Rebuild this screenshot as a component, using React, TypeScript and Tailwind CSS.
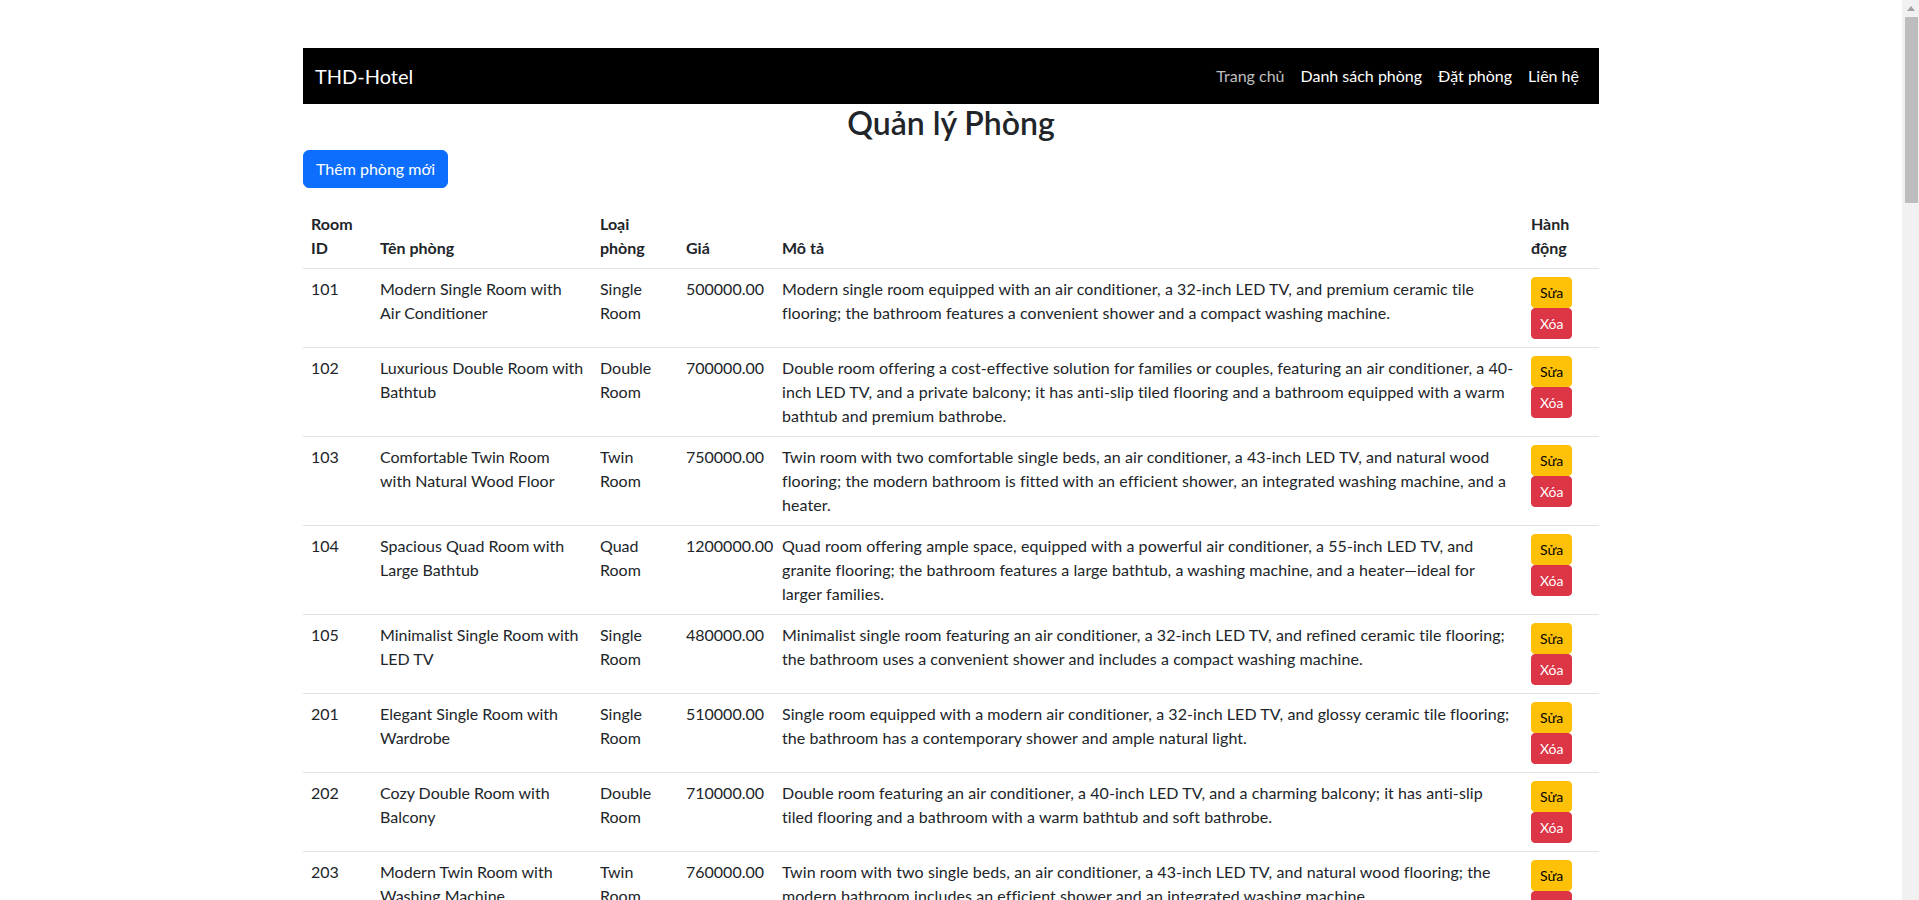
import React from "react";

type Room = {
  id: number;
  name: string;
  type: string;
  price: string;
  desc: string;
};

const firstRooms: Room[] = [
  {
    id: 101,
    name: "Modern Single Room with Air Conditioner",
    type: "Single Room",
    price: "500000.00",
    desc: "Modern single room equipped with an air conditioner, a 32-inch LED TV, and premium ceramic tile flooring; the bathroom features a convenient shower and a compact washing machine.",
  },
  {
    id: 102,
    name: "Luxurious Double Room with Bathtub",
    type: "Double Room",
    price: "700000.00",
    desc: "Double room offering a cost-effective solution for families or couples, featuring an air conditioner, a 40-inch LED TV, and a private balcony; it has anti-slip tiled flooring and a bathroom equipped with a warm bathtub and premium bathrobe.",
  },
  {
    id: 103,
    name: "Comfortable Twin Room with Natural Wood Floor",
    type: "Twin Room",
    price: "750000.00",
    desc: "Twin room with two comfortable single beds, an air conditioner, a 43-inch LED TV, and natural wood flooring; the modern bathroom is fitted with an efficient shower, an integrated washing machine, and a heater.",
  },
  {
    id: 104,
    name: "Spacious Quad Room with Large Bathtub",
    type: "Quad Room",
    price: "1200000.00",
    desc: "Quad room offering ample space, equipped with a powerful air conditioner, a 55-inch LED TV, and granite flooring; the bathroom features a large bathtub, a washing machine, and a heater\u2014ideal for larger families.",
  },
  {
    id: 105,
    name: "Minimalist Single Room with LED TV",
    type: "Single Room",
    price: "480000.00",
    desc: "Minimalist single room featuring an air conditioner, a 32-inch LED TV, and refined ceramic tile flooring; the bathroom uses a convenient shower and includes a compact washing machine.",
  },
  {
    id: 201,
    name: "Elegant Single Room with Wardrobe",
    type: "Single Room",
    price: "510000.00",
    desc: "Single room equipped with a modern air conditioner, a 32-inch LED TV, and glossy ceramic tile flooring; the bathroom has a contemporary shower and ample natural light.",
  },
  {
    id: 202,
    name: "Cozy Double Room with Balcony",
    type: "Double Room",
    price: "710000.00",
    desc: "Double room featuring an air conditioner, a 40-inch LED TV, and a charming balcony; it has anti-slip tiled flooring and a bathroom with a warm bathtub and soft bathrobe.",
  },
  {
    id: 203,
    name: "Modern Twin Room with Washing Machine",
    type: "Twin Room",
    price: "760000.00",
    desc: "Twin room with two single beds, an air conditioner, a 43-inch LED TV, and natural wood flooring; the modern bathroom includes an efficient shower and an integrated washing machine.",
  },
  {
    id: 204,
    name: "Family Quad Room with Heater",
    type: "Quad Room",
    price: "1210000.00",
    desc: "Quad room with generous space, a powerful air conditioner, a 55-inch LED TV, and granite flooring; the bathroom offers a large bathtub, a washing machine, and a heater.",
  },
  {
    id: 205,
    name: "Bright Single Room with Desk",
    type: "Single Room",
    price: "490000.00",
    desc: "Single room with an air conditioner, a 32-inch LED TV, a work desk, and ceramic tile flooring; the bathroom has a convenient shower and a compact washing machine.",
  },
];

// các phòng tầng trên dùng lại mẫu, chỉ đổi giá
const templates = firstRooms.slice(5);
const priceBump = [0, 20000, 40000, 60000, 80000, 100000, 120000, 140000];

const rooms: Room[] = [...firstRooms];
for (let floor = 3; floor <= 10; floor++) {
  templates.forEach((t, i) => {
    if (rooms.length >= 48) return;
    const base = parseFloat(t.price);
    rooms.push({
      ...t,
      id: floor * 100 + i + 1,
      price: (base + priceBump[floor - 3]).toFixed(2),
    });
  });
}

export default function App() {
  return (
    <div className="flex h-screen overflow-hidden bg-white text-[#212529] font-['Segoe_UI',Lato,'Noto_Sans',sans-serif] text-base leading-6">
      <div className="flex-1 overflow-y-auto [scrollbar-width:none]">
        <div className="mx-auto max-w-[1320px] px-3 pt-12">
          {/* thanh điều hướng */}
          <nav className="bg-black h-14 flex items-center justify-between px-3">
            <a className="text-white text-xl leading-[30px]">THD-Hotel</a>
            <ul className="flex items-center">
              <li>
                <a className="block px-2 py-2 text-white/75">Trang chủ</a>
              </li>
              <li>
                <a className="block px-2 py-2 text-white">Danh sách phòng</a>
              </li>
              <li>
                <a className="block px-2 py-2 text-white">Đặt phòng</a>
              </li>
              <li>
                <a className="block px-2 py-2 text-white">Liên hệ</a>
              </li>
            </ul>
          </nav>

          <h2 className="text-center text-[32px] leading-[1.2] font-semibold mb-2">
            Quản lý Phòng
          </h2>

          <div className="mb-4">
            <button className="inline-flex bg-[#0d6efd] border border-[#0d6efd] text-white rounded-md px-3 py-1.5 leading-6">
              Thêm phòng mới
            </button>
          </div>

          {/* bảng phòng */}
          <table className="w-full table-fixed border-collapse">
            <colgroup>
              <col className="w-[69px]" />
              <col className="w-[220px]" />
              <col className="w-[86px]" />
              <col className="w-[96px]" />
              <col />
              <col className="w-[76px]" />
            </colgroup>
            <thead>
              <tr className="align-bottom">
                <th className="p-2 text-left font-bold border-b border-[#dee2e6]">Room ID</th>
                <th className="p-2 text-left font-bold border-b border-[#dee2e6]">Tên phòng</th>
                <th className="p-2 text-left font-bold border-b border-[#dee2e6]">Loại phòng</th>
                <th className="p-2 text-left font-bold border-b border-[#dee2e6]">Giá</th>
                <th className="p-2 text-left font-bold border-b border-[#dee2e6]">Mô tả</th>
                <th className="p-2 text-left font-bold border-b border-[#dee2e6]">Hành động</th>
              </tr>
            </thead>
            <tbody>
              {rooms.map((r) => (
                <tr key={r.id} className="align-top">
                  <td className="p-2 border-b border-[#dee2e6]">{r.id}</td>
                  <td className="p-2 border-b border-[#dee2e6]">{r.name}</td>
                  <td className="p-2 border-b border-[#dee2e6]">{r.type}</td>
                  <td className="p-2 border-b border-[#dee2e6]">{r.price}</td>
                  <td className="p-2 border-b border-[#dee2e6] tracking-[0.07px]">{r.desc}</td>
                  <td className="p-2 border-b border-[#dee2e6]">
                    <div className="flex flex-col items-start">
                      <button className="bg-[#ffc107] border border-[#ffc107] text-black text-sm leading-[21px] px-2 py-1 rounded">
                        Sửa
                      </button>
                      <button className="bg-[#dc3545] border border-[#dc3545] text-white text-sm leading-[21px] px-2 py-1 rounded">
                        Xóa
                      </button>
                    </div>
                  </td>
                </tr>
              ))}
            </tbody>
          </table>
        </div>
      </div>

      {/* thanh cuộn bên phải */}
      <div className="w-[17px] shrink-0 bg-[#f1f1f1] flex flex-col items-center">
        <div className="h-[17px] flex items-center justify-center">
          <svg width="8" height="5" viewBox="0 0 8 5">
            <polygon points="4,0 8,5 0,5" fill="#a3a3a3" />
          </svg>
        </div>
        <div className="w-[13px] h-[186px] bg-[#bdbdbd] ml-[1px]" />
      </div>
    </div>
  );
}
